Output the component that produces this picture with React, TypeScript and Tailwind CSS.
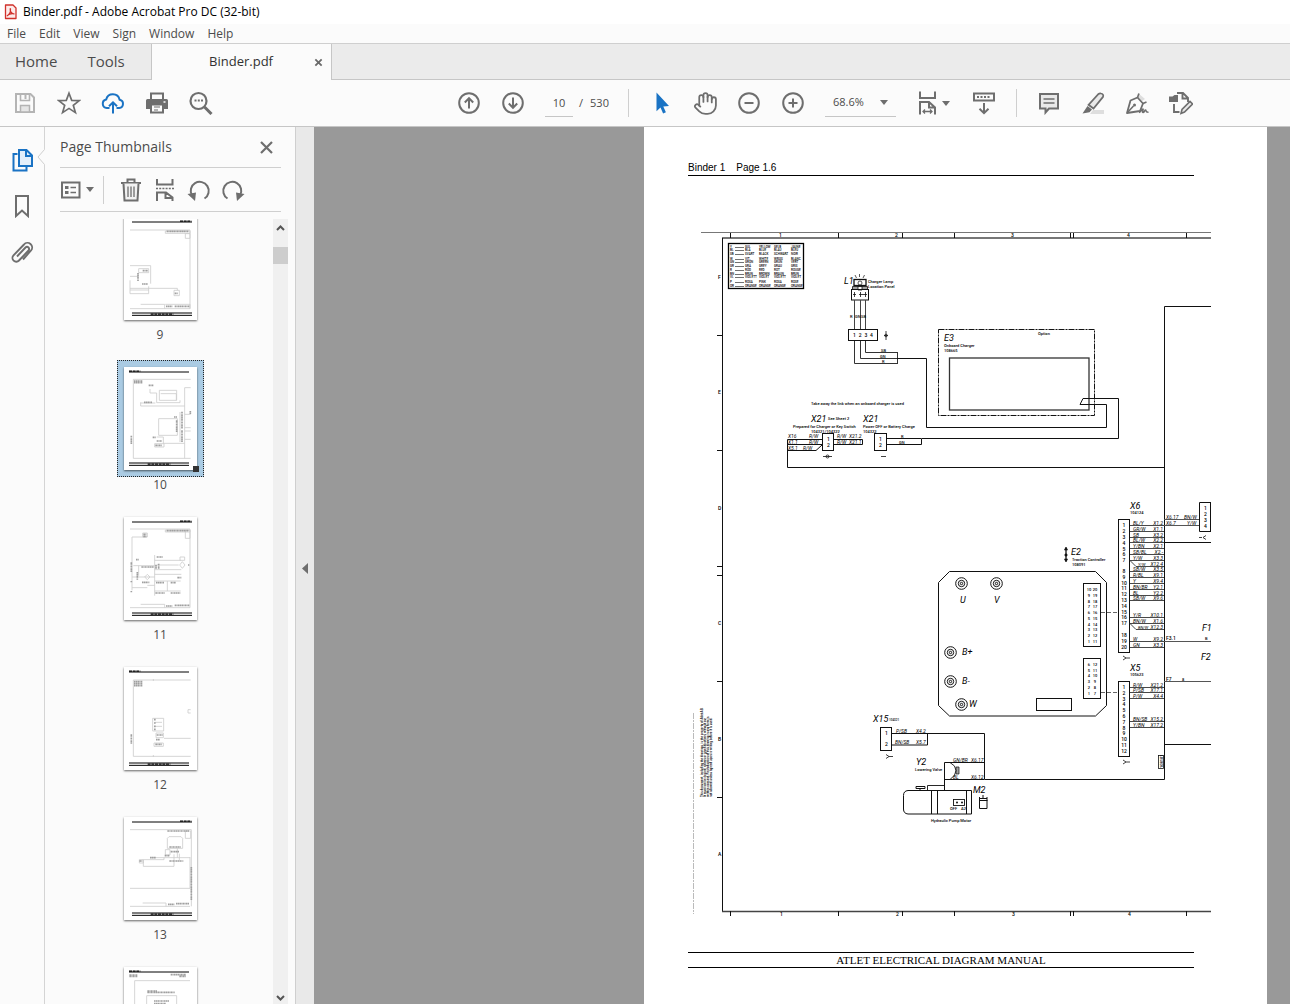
import type { ReactNode } from 'react'
import { Hand } from 'lucide-react'

const uiFont = "font-['Open_Sans','Noto_Sans',sans-serif]"

function Icon({ size = 24, children }: { size?: number; children: ReactNode }) {
  return (
    <svg
      width={size}
      height={size}
      viewBox="0 0 24 24"
      fill="none"
      stroke="currentColor"
      strokeWidth="2"
      className="shrink-0"
      aria-hidden="true"
    >
      {children}
    </svg>
  )
}

function ToolButton({ label, className = 'text-[#6e6e6e]', children }: { label: string; className?: string; children: ReactNode }) {
  return (
    <button type="button" aria-label={label} className={`flex h-10 w-11 shrink-0 items-center justify-center ${className}`}>
      {children}
    </button>
  )
}

function Caret() {
  return (
    <svg width="8" height="5" viewBox="0 0 8 5" className="shrink-0" aria-hidden="true">
      <path d="M0 0h8L4 5z" fill="#6e6e6e" />
    </svg>
  )
}

function TitleBar() {
  return (
    <div className="flex h-6 items-center gap-[6px] bg-white pl-1 text-xs text-black">
      <svg width="13" height="16" viewBox="0 0 13 16" fill="none" aria-hidden="true">
        <path d="M1.500 1h7.500l3 3v10.500h-10.500z" fill="#fdeceb" stroke="#d0312b" strokeWidth="1.300" strokeLinejoin="round" />
        <path d="M3.200 11.800c2.200-1.200 3.600-4 3.300-7M6.200 4.700c-.2 2.600 1.300 4.500 3.700 5.300M3.200 11.600c1.800-1.500 4.400-2.200 6.800-1.800" stroke="#d0312b" strokeWidth="1.200" strokeLinecap="round" />
      </svg>
      <span>Binder.pdf - Adobe Acrobat Pro DC (32-bit)</span>
    </div>
  )
}

function MenuBar() {
  return (
    <nav className="flex h-5 items-center gap-[13px] border-b border-[#cfcfcf] bg-[#fbfbfb] pl-[7px] text-xs leading-[18px] text-[#4b4b4b]">
      {['File', 'Edit', 'View', 'Sign', 'Window', 'Help'].map((item) => (
        <button key={item} type="button">
          {item}
        </button>
      ))}
    </nav>
  )
}

function TabBar() {
  return (
    <div className="flex h-9 bg-[#ebebeb] text-[#4b4b4b]">
      <div className="flex w-[152px] items-center gap-[30px] border-r border-b border-[#c6c6c6] pl-[15px] text-[15px]">
        <button type="button">Home</button>
        <button type="button">Tools</button>
      </div>
      <div className="flex w-[179px] items-center justify-end gap-[41px] bg-[#fbfbfb] pr-2 text-[13px] text-[#323232]">
        <button type="button">Binder.pdf</button>
        <button type="button" aria-label="Close tab">
          <svg width="9" height="9" viewBox="0 0 10 10" aria-hidden="true">
            <path d="M1.500 1.500l7 7M8.500 1.500l-7 7" stroke="#6a6a6a" strokeWidth="2" />
          </svg>
        </button>
      </div>
      <div className="flex-1 border-b border-l border-[#c6c6c6]" />
    </div>
  )
}

function Toolbar() {
  return (
    <div className="flex h-[47px] items-center border-b border-[#c6c6c6] bg-[#fbfbfb] pl-[3px] text-[11px] text-[#4b4b4b]">
      <ToolButton label="Save" className="text-[#b4b4b4]">
        <Icon>
          <path d="M3 3h14.500L21 6.500V21H3z" />
          <path d="M7.500 3v6.500h9V3" strokeWidth="1.600" />
          <path d="M12.500 4v4" />
          <path d="M7.500 21v-6.500h9V21z" fill="#e6e6e6" strokeWidth="1.500" />
        </Icon>
      </ToolButton>
      <ToolButton label="Add to favorites">
        <Icon>
          <path d="M12 2.200l2.700 7.100 7.600.3-6 4.700 2.100 7.300L12 17.400l-6.400 4.200 2.100-7.300-6-4.700 7.600-.3z" strokeWidth="1.700" />
        </Icon>
      </ToolButton>
      <ToolButton label="Upload to cloud" className="text-[#1a73c4]">
        <Icon>
          <path d="M8.500 17H5.800a4.300 4.300 0 0 1-.6-8.500A6.900 6.900 0 0 1 18.600 8.700 4.200 4.200 0 0 1 18.200 17h-2.700" />
          <path d="M12 22.500V11.500M8 15.300l4-4 4 4" />
        </Icon>
      </ToolButton>
      <ToolButton label="Print">
        <Icon>
          <path d="M6 9V2.500h12V9" />
          <path d="M2.500 8h19A1.500 1.500 0 0 1 23 9.500V18H1V9.500A1.500 1.500 0 0 1 2.500 8z" fill="currentColor" stroke="none" />
          <path d="M6 13.500h12v8H6z" fill="#fbfbfb" />
          <path d="M9 16h6M9 19h4" strokeWidth="1.200" />
          <path d="M18.500 11h2" stroke="#fbfbfb" strokeWidth="1.500" />
        </Icon>
      </ToolButton>
      <ToolButton label="Find text">
        <Icon>
          <circle cx="9.500" cy="10" r="8" strokeWidth="2.200" />
          <path d="M15.500 16l7 7" strokeWidth="3" />
          <path d="M5.500 9.500h2M8.800 9.500h2M12 9.500h2" strokeWidth="1.800" />
        </Icon>
      </ToolButton>

      <div className="ml-[224px] flex items-center">
        <ToolButton label="Previous page">
          <Icon>
            <circle cx="12" cy="12" r="9.800" />
            <path d="M12 17.500V7.500M7.800 11.500L12 7.200l4.200 4.300" />
          </Icon>
        </ToolButton>
        <ToolButton label="Next page">
          <Icon>
            <circle cx="12" cy="12" r="9.800" />
            <path d="M12 6.500v10M7.800 12.500l4.200 4.300 4.200-4.300" />
          </Icon>
        </ToolButton>
        <input
          aria-label="Page number"
          defaultValue="10"
          className="ml-[10px] h-7 w-7 border-b border-[#c6c6c6] bg-transparent text-center outline-none"
        />
        <span className="ml-[6px] flex w-[43px] gap-[7px]">
          <span>/</span>
          <span>530</span>
        </span>
        <div className="mx-[6px] h-7 w-px bg-[#cfcfcf]" />
      </div>

      <div className="ml-[4px] flex items-center">
        <ToolButton label="Select" className="text-[#1a73c4]">
          <Icon>
            <path d="M7.500 1.500v18.800l4-3.800 2.600 6 2.800-1.200-2.600-5.800 5.700-.5z" fill="currentColor" stroke="none" />
          </Icon>
        </ToolButton>
        <ToolButton label="Pan">
          <Hand size={25} strokeWidth={1.700} />
        </ToolButton>
        <ToolButton label="Zoom out">
          <Icon>
            <circle cx="12" cy="12" r="9.800" />
            <path d="M7.500 12h9" />
          </Icon>
        </ToolButton>
        <ToolButton label="Zoom in">
          <Icon>
            <circle cx="12" cy="12" r="9.800" />
            <path d="M7.500 12h9M12 7.500v9" />
          </Icon>
        </ToolButton>
        <div className="ml-[10px] flex h-7 w-[71px] items-center border-b border-[#c6c6c6] pr-2 pl-2">
          <select aria-label="Zoom level" defaultValue="68.6%" className="w-0 flex-1 appearance-none bg-transparent outline-none">
            <option>68.6%</option>
          </select>
          <Caret />
        </div>
        <button type="button" aria-label="Fit width" className="ml-5 flex h-10 items-center gap-[2px] text-[#6e6e6e]">
          <Icon>
            <path d="M4 .5V7h15V.5" />
            <path d="M4 23.500V11h9l6 5.500v7M13 11v5.500h6" />
            <path d="M7 20.500h9M9 18.500l-2 2 2 2M14 18.500l2 2-2 2" strokeWidth="1.300" />
          </Icon>
          <Caret />
        </button>
        <div className="w-[12px]" />
        <ToolButton label="Scrolling pages">
          <Icon>
            <path d="M2 2.500h20v7H2z" />
            <path d="M5 6h14" strokeDasharray="2 1.500" />
            <path d="M12 12v10M7.500 17.800l4.500 4.400 4.500-4.400" />
          </Icon>
        </ToolButton>
        <div className="mx-[10px] h-7 w-px bg-[#cfcfcf]" />
        <ToolButton label="Add comment">
          <Icon>
            <path d="M3 3h18v14.500H12L8.500 21.500v-4H3z" fill="#e9e9e9" />
            <path d="M6.500 8h11M6.500 12h11" strokeWidth="1.500" />
          </Icon>
        </ToolButton>
        <ToolButton label="Highlight text">
          <Icon>
            <path d="M12 19h11v4H9z" fill="#dedede" stroke="none" />
            <path d="M20 2.500a2.300 2.300 0 0 1 2 3.400L12.500 17.500l-5-3.700L17.500 3a3 3 0 0 1 2.500-.5z" fill="#e9e9e9" strokeWidth="1.700" />
            <path d="M6.500 15l4.500 3.500-2.500 2.800L1.500 22.500z" fill="currentColor" stroke="none" />
          </Icon>
        </ToolButton>
        <ToolButton label="Sign document">
          <Icon>
            <path d="M13 2l7 6-3 2-5-4.500z" fill="#dedede" stroke="none" />
            <path d="M2 22L5.500 9.500l7-3 5.500 6-3 7.500z" strokeWidth="1.800" strokeLinejoin="round" />
            <path d="M2.500 21.500l6-6.500M12.500 6.500l1.500-4M18 12.500l3.500-1.500" strokeWidth="1.600" />
            <circle cx="9.500" cy="14" r="1.500" fill="currentColor" stroke="none" />
            <path d="M14 21.500c2-.5 3-4 4-3.500s-1.500 3.500 0 3.500 1.500-2.500 2.500-2.500-.5 2.500 3 2.300" strokeWidth="1.500" />
          </Icon>
        </ToolButton>
        <ToolButton label="Edit PDF">
          <Icon>
            <path d="M8 2h6l5 5v4M13.500 2v5.500h5.500M5 13v8h5.500" strokeWidth="1.900" />
            <path d="M0 5.500h3.500L5.500 4H9v7H0z" fill="currentColor" stroke="none" />
            <path d="M12 22.500l1-4 8-8 2.500 2.500-8 8z" fill="#e9e9e9" strokeWidth="1.600" />
          </Icon>
        </ToolButton>
      </div>
    </div>
  )
}

function NavRail() {
  return (
    <div className="relative flex w-[45px] shrink-0 flex-col items-center gap-[22px] border-r border-[#d4d4d4] pt-[21px] text-[#6e6e6e]">
      <button type="button" aria-label="Page thumbnails" className="text-[#1a73c4]">
        <Icon>
          <path d="M7.500 6H3.500v16.500h13V19" fill="none" />
          <path d="M9 2h7.500L22 7.500V18H9z" fill="#e4effa" />
          <path d="M16 2v6h6" />
        </Icon>
      </button>
      <button type="button" aria-label="Bookmarks">
        <Icon>
          <path d="M6 2h12v20l-6-5.500L6 22z" />
        </Icon>
      </button>
      <button type="button" aria-label="Attachments">
        <Icon>
          <path d="M7 16.500l8.500-9a2.100 2.100 0 0 1 3 3l-9.500 10a3.700 3.700 0 0 1-5.500-5.200L14 4.500a4.500 4.500 0 0 1 7 6L13 19.500" strokeWidth="1.900" />
        </Icon>
      </button>
      <svg width="8" height="16" viewBox="0 0 8 16" className="absolute top-[22px] -right-px" aria-hidden="true">
        <path d="M8 0v16L1 8z" fill="#fbfbfb" />
        <path d="M7.500 .5L1 8l6.500 7.500" fill="none" stroke="#cfcfcf" />
      </svg>
    </div>
  )
}

type Thumb = { page: number; lines: string; dense: string }

// Paths are in thirds of a pixel of the thumbnail
const thumbs: Thumb[] = [
  {
    page: 9,
    lines:
      'M18 39H198M198 39V275M18 275H198M18 146H80V200M18 178H42M18 190V230H74V208M18 214H160M18 219H74M160 214V220M150 220h16v16h-16zM124 42h74v7h-74zM184 50h14v14h-14zM44 155h30v12h-30zM50 262h72v13M124 262h74v13',
    dense: 'M56 161H72M42 168V192M54 201H72M128 43H194M126 268H146M152 268H196M152 229H162',
  },
  {
    page: 10,
    lines:
      'M28 37H200M28 37V274M28 274H200M182 274V62H200M106 70h52v30h-52zM110 80h47v20M78 66V78H98V107H168V100M50 106V117H182M50 108H94M104 155h56v50h-56zM168 135v90M182 142H200M182 182H200M182 192H200M182 217H200M98 210H118V229H182M92 230h28v10h-28z',
    dense: 'M30 42H56M30 47H56M74 55H88M60 106H84M158 160V196M174 134V185M174 190V225M150 150H160M86 211H96M98 222H114M94 235H114M22 206V232M199 132V142',
  },
  {
    page: 11,
    lines:
      'M18 36H198V272M18 272H198M24 60V220M24 60H68M92 114V236M92 130H170M92 144H164M92 158H172M92 172H172M92 192H170M24 180H92M24 212H70M28 146H92M130 192V222M44 146V176M70 205H92M92 222H170M56 48h14v12h-14zM184 40h14v24h-14zM124 39h74v6h-74zM50 262h72v10M168 120h14v10h-14zM175 134l8 10-8 10-8-10zM70 172l8 8-8 8-8-8z',
    dense: 'M128 41H194M58 52H68M58 58H68M52 150H90M96 144V156M104 140V156M22 136V166M22 192V196M40 165V188M54 196H76M96 197H120M140 197H156M94 228H122M140 228H170M160 182H172M98 120H116M126 267H146M152 265H196M36 128H44M192 144H196M22 222V226',
  },
  {
    page: 12,
    lines: 'M28 39H200M28 39V268M28 268H200M86 154h33v38h-33zM92 166H114M92 178H114M120 214H200M96 198h22v14h-22zM90 228h28v10h-28zM200 128h-8v10h8M88 36v6M88 264v6',
    dense: 'M30 44H56M30 50H56M30 56H56M90 158H96M90 168H96M90 178H96M90 187H96M98 204H116M96 218H108M94 232H114M22 202V230',
  },
  {
    page: 13,
    lines:
      'M18 38H202V268M18 268H198M198 120V214H18M130 64l5-5h36l5 5v30h-46zM80 122H198M58 148H150V112M58 128V148M58 128H120V122M160 94V122M166 110v20M124 98h14v16h-14zM46 128h12v10h-12zM184 42h16v22h-16zM56 258h70v10',
    dense: 'M136 90H170M130 42H196M78 122H96M140 104H166M122 116H136M136 132H178M46 132H56M202 150V250M132 262H152M156 260H196',
  },
  {
    page: 14,
    lines: 'M32 41H198M32 41V300M68 86h90V300H68z',
    dense: 'M16 24H40M16 28H40M140 23H186M166 28H186M70 72H100M70 76H152M90 102H136M90 110H126',
  },
]

function PageThumb({ thumb, showNumber }: { thumb: Thumb; showNumber: boolean }) {
  const selected = thumb.page === 10
  const left = thumb.page % 2 ? 24 : 15
  const titleX = thumb.page % 2 ? 168 : 15
  return (
    <button type="button" aria-label={`Page ${thumb.page}`} className="flex h-[150px] shrink-0 flex-col items-center">
      <span className={`relative border p-[6px] ${selected ? 'border-dotted border-[#222] bg-[#aacbe3]' : 'border-transparent'}`}>
        <svg
          width="73"
          height="103"
          viewBox="0 0 219 309"
          fill="none"
          className="bg-white shadow-[0_1px_2px_rgba(0,0,0,0.6)]"
          aria-hidden="true"
        >
          <path d={thumb.lines} stroke="#cccccc" strokeWidth="2.500" />
          <path d={thumb.dense} stroke="#a0a0a0" strokeWidth="5" strokeDasharray="5 1 3 1" />
          <path d={`M${left} 15H${left + 180}M${left} 288H${left + 180}M${left} 295H${left + 180}`} stroke="#000" strokeWidth="3" />
          <path d={`M${titleX} 12.500h34M${left + 56} 291.500h68`} stroke="#000" strokeWidth="4" strokeDasharray="9 2" />
        </svg>
        {selected && <span className="absolute right-1 bottom-1 size-[6px] bg-[#333]" />}
      </span>
      {showNumber && <span className="text-xs leading-4 text-[#4b4b4b]">{thumb.page}</span>}
    </button>
  )
}

function ThumbnailPanel() {
  return (
    <aside className="flex w-[250px] shrink-0 flex-col">
      <div className="mr-[14px] ml-[15px] flex h-[41px] items-center justify-between border-b border-[#cfcfcf] pr-2 text-[#4b4b4b]">
        <h2 className="text-sm">Page Thumbnails</h2>
        <button type="button" aria-label="Close panel">
          <svg width="13" height="13" viewBox="0 0 13 13" aria-hidden="true">
            <path d="M1 1l11 11M12 1L1 12" stroke="#6e6e6e" strokeWidth="2.200" />
          </svg>
        </button>
      </div>
      <div className="mr-[14px] ml-[15px] flex h-11 shrink-0 items-center border-b border-[#cfcfcf] text-[#6e6e6e]">
        <button type="button" aria-label="Options" className="flex items-center gap-[5px]">
          <svg width="21" height="18" viewBox="0 0 21 18" fill="none" stroke="currentColor" strokeWidth="2" aria-hidden="true">
            <path d="M2 1.500h17.500v15H2z" />
            <path d="M5 6.500h3.500M5 11.500h3.500" strokeWidth="3.200" />
            <path d="M10.500 6.500H16M10.500 11.500H16" strokeWidth="1.600" />
          </svg>
          <Caret />
        </button>
        <div className="mr-[15px] ml-[9px] h-7 w-px bg-[#cfcfcf]" />
        <div className="flex gap-[10px]">
          <button type="button" aria-label="Delete pages">
            <Icon>
              <path d="M2 5h20M8.500 4.500v-3h7v3" />
              <path d="M4.500 5.500l1 17h13l1-17" fill="#f1f1f1" />
              <path d="M9 8.500v10.500M12 8.500v10.500M15 8.500v10.500" strokeWidth="1.300" />
            </Icon>
          </button>
          <button type="button" aria-label="Insert pages">
            <Icon>
              <path d="M4 1v5.500h15.500V1" />
              <path d="M3 10.500h18" strokeWidth="1.600" strokeDasharray="2 1.200" />
              <path d="M4 23v-8.500h9l6.500 5V23M12.500 14.500V20h7" />
            </Icon>
          </button>
          <button type="button" aria-label="Rotate left">
            <Icon>
              <path d="M5 17.500A9 9 0 1 1 17.500 20.500" />
              <path d="M.5 16l8.500-1.500-1 8.500z" fill="currentColor" stroke="none" />
            </Icon>
          </button>
          <button type="button" aria-label="Rotate right">
            <Icon>
              <path d="M19 17.500A9 9 0 1 0 6.500 20.500" />
              <path d="M23.500 16l-8.500-1.500 1 8.500z" fill="currentColor" stroke="none" />
            </Icon>
          </button>
        </div>
      </div>
      <div className="mt-[7px] flex min-h-0 flex-1 pr-[7px]">
        <div className="flex flex-1 flex-col items-center overflow-hidden pl-[2px]">
          <div className="-mt-[9px] flex flex-col">
            {thumbs.map((thumb, i) => (
              <PageThumb key={thumb.page} thumb={thumb} showNumber={i < thumbs.length - 1} />
            ))}
          </div>
        </div>
        <div className="flex w-[15px] flex-col items-center bg-[#f0f0f0]">
          <button type="button" aria-label="Scroll up" className="flex h-[17px] items-center">
            <svg width="9" height="6" viewBox="0 0 9 6" fill="none" aria-hidden="true">
              <path d="M1 5l3.500-3.500L8 5" stroke="#555" strokeWidth="2" />
            </svg>
          </button>
          <div className="mt-[11px] h-[17px] w-full bg-[#cdcdcd]" />
          <button type="button" aria-label="Scroll down" className="mt-auto flex h-[13px] items-center">
            <svg width="9" height="6" viewBox="0 0 9 6" fill="none" aria-hidden="true">
              <path d="M1 1l3.500 3.500L8 1" stroke="#555" strokeWidth="2" />
            </svg>
          </button>
        </div>
      </div>
    </aside>
  )
}

const legend = [
  [248, 'Y', 'GUL', 'YELLOW', 'GELB', 'JAUNE'],
  [251, 'BL', 'BLÅ', 'BLUE', 'BLAU', 'BLEU'],
  [255, 'SB', 'SVART', 'BLACK', 'SCHWARZ', 'NOIR'],
  [260, 'W', 'VIT', 'WHITE', 'WEISS', 'BLANC'],
  [263, 'GN', 'GRÖN', 'GREEN', 'GRÜN', 'VERT'],
  [267, 'GR', 'GRÅ', 'GREY', 'GRAU', 'GRIS'],
  [271, 'R', 'RÖD', 'RED', 'ROT', 'ROUGE'],
  [275, 'BN', 'BRUN', 'BROWN', 'BRAUN', 'BRUN'],
  [278, 'VL', 'VIOLETT', 'VIOLET', 'VIOLETT', 'VIOLET'],
  [283, 'P', 'ROSA', 'PINK', 'ROSA', 'ROSE'],
  [287, 'OR', 'ORANGE', 'ORANGE', 'ORANGE', 'ORANGE'],
] as const

// y of the wire, colour code, destination, branch wire
const wires: [number, string, string, boolean?][] = [
  [525.5, 'BL/Y', 'X1.2'],
  [531.5, 'GR/W', 'X1.1'],
  [537.5, 'SB', 'X3.2'],
  [542.5, 'BL/W', 'X2.2'],
  [548.5, 'Y/BN', 'X2.1'],
  [554.5, 'SB/BL', 'X2.-'],
  [560.5, 'Y/W', 'X3.3'],
  [566.5, 'Y/W', 'X12.4', true],
  [571.5, 'SB/W', 'X3.5'],
  [577.5, 'R/BL', 'X9.1'],
  [583.5, 'Y', 'X9.4'],
  [589.5, 'BN/BR', 'Y2.1'],
  [595.5, 'BL', 'Y2.2'],
  [600.5, 'SB/W', 'X9.6'],
  [617.5, 'Y/R', 'X10.1'],
  [623.5, 'BN/W', 'X1.6'],
  [629.5, 'BN/W', 'X12.3', true],
  [641.5, 'W', 'X9.2'],
  [647.5, 'GN', 'X3.3'],
  [687.5, 'R/W', 'X21.2'],
  [692.5, 'P/SB', 'X17.1'],
  [698.5, 'P/W', 'X4.4'],
  [721.5, 'BN/SB', 'X15.2'],
  [727.5, 'Y/BN', 'X17.2'],
]

const x6Pins = [527, 533, 539, 545, 551, 556, 562, 573, 579, 585, 590, 596, 602, 608, 614, 619, 625, 637, 643, 649]
const rulerTicks = [730, 838, 902, 954, 1070, 1073, 1186]
const terminals = [
  [961.5, 583.5],
  [996.5, 583.5],
  [950.5, 652.5],
  [950.5, 681.5],
  [961.5, 704.5],
]

function Note({ x, y, size = 4, children }: { x: number; y: number; size?: number; children: ReactNode }) {
  return (
    <text x={x} y={y} fontSize={size} fontWeight={500}>
      {children}
    </text>
  )
}

function Tag({ x, y, size = 9, children }: { x: number; y: number; size?: number; children: ReactNode }) {
  return (
    <text x={x} y={y} fontSize={size} fontStyle="italic">
      {children}
    </text>
  )
}

function WiringDiagram() {
  return (
    <svg
      viewBox="688 226 524 694"
      className="block w-[524px] font-['Roboto',sans-serif]"
      role="img"
      aria-label="Wiring diagram"
    >
      {/* sheet frame */}
      <g fill="none" stroke="#111">
        <path d="M701 232.500H1211" stroke="#777" />
        <path d="M722 238H1211" stroke="#777" strokeWidth="2" />
        <path d="M722.500 238V911.500" />
        <path d="M722 911.500H1211" stroke="#444" strokeWidth="1.500" />
        <path d="M717 335.500h5M717 450.500h5M717 566.500h5M717 575.500h5M717 681.500h5M717 797.500h5" />
        <path d="M693.500 713V914" stroke="#bbb" strokeDasharray="6 1 2 1" />
        {rulerTicks.map((x) => (
          <path key={x} d={`M${x + 0.5} 233v5M${x + 0.5} 911v5`} />
        ))}
      </g>
      <g>
        {[780, 896, 1012, 1128].map((x, i) => (
          <g key={x}>
            <Note x={x - 1} y={237} size={5}>{i + 1}</Note>
            <Note x={x} y={916} size={5}>{i + 1}</Note>
          </g>
        ))}
        {['F', 'E', 'D', 'C', 'B', 'A'].map((letter, i) => (
          <Note key={letter} x={718} y={279 + i * 115.4} size={5}>{letter}</Note>
        ))}
      </g>

      {/* colour code legend */}
      <rect x="728.500" y="243.500" width="75" height="45" fill="none" stroke="#000" strokeWidth="1.300" />
      {legend.map(([y, code, sv, en, de, fr]) => (
        <g key={code}>
          <path d={`M735 ${y - 0.5}h9`} stroke="#333" strokeWidth=".7" />
          <Note x={730} y={y} size={3}>{code}</Note>
          <Note x={745} y={y} size={3}>{sv}</Note>
          <Note x={759} y={y} size={3}>{en}</Note>
          <Note x={774} y={y} size={3}>{de}</Note>
          <Note x={791} y={y} size={3}>{fr}</Note>
        </g>
      ))}

      {/* charger lamp */}
      <g fill="none" stroke="#111">
        <path d="M859.500 274v3M855 275l1.500 3M864.500 275l-1.500 3" strokeWidth=".7" />
        <rect x="854" y="279.500" width="12" height="6" strokeWidth="1.300" />
        <circle cx="860" cy="283" r="2" strokeWidth=".7" />
        <path d="M852.500 286.500h15v3h-15zM858 286v4h4v-4z" fill="#111" fillOpacity=".4" strokeWidth=".8" />
        <rect x="851.500" y="289.500" width="17" height="10.500" />
        <path d="M853 294.500h3M859 294.500h8M854.500 292v5M860.500 292v5M865.500 292v5" strokeWidth=".8" />
        <path d="M854.500 300V329M860.500 300V329M865.500 300V329" stroke="#444" />
        <rect x="848.500" y="329.500" width="29" height="11" />
        <path d="M854.500 341V363.500H897.500M860.500 341V358.500H897M865.500 341V352.500H897.500M897.500 352V364" stroke="#333" />
        <path d="M884 335.500h4M886 331v9" strokeWidth=".8" />
        <circle cx="886" cy="335.500" r="1.300" strokeWidth=".7" />
      </g>
      <Tag x={844} y={284}>L1</Tag>
      <Note x={868} y={283}>Charger Lamp</Note>
      <Note x={868} y={288}>Location Panel</Note>
      {[1, 2, 3, 4].map((n, i) => (
        <Note key={n} x={853 + i * 5.7} y={337} size={5}>{n}</Note>
      ))}
      <Note x={850} y={318}>R</Note>
      <Note x={855} y={318}>GN</Note>
      <Note x={861} y={318}>SB</Note>
      <Note x={881} y={352}>SB</Note>
      <Note x={880} y={358}>GN</Note>
      <Note x={882} y={363}>R</Note>

      {/* onboard charger */}
      <g fill="none" stroke="#111">
        <rect x="938.500" y="329.500" width="156" height="86" strokeDasharray="6 1 2 1" />
        <rect x="949.500" y="358" width="139.500" height="52" stroke="#333" strokeWidth="1.300" />
        <path d="M897 358.500H926.500V427.500H1106.500V404.500H1080L1083 398.500H1118.500V438.500H921.500V444.500H886M886 438.500H921" />
      </g>
      <Tag x={944} y={341}>E3</Tag>
      <Note x={944} y={347}>Onboard Charger</Note>
      <Note x={944} y={352}>108665</Note>
      <Note x={1038} y={335}>Option</Note>

      {/* X21 connectors */}
      <g fill="none" stroke="#111">
        <path d="M822 439.500H787.500V467.500H1164M787 444.500H822M787 450.500H816L822 445" />
        <path d="M834 439.500H862.500V444.500H834" />
        <rect x="822.500" y="433.500" width="11" height="17" />
        <rect x="874.500" y="433.500" width="12" height="17" />
        <path d="M823 456.500h9M881 456.500h5" strokeWidth=".8" />
        <circle cx="827.500" cy="456.500" r="1.500" strokeWidth=".8" />
      </g>
      <Note x={811} y={405}>Take away the link when an onboard charger is used</Note>
      <Tag x={811} y={422}>X21</Tag>
      <Note x={828} y={420}>See Sheet 2</Note>
      <Tag x={863} y={422}>X21</Tag>
      <Note x={793} y={428}>Prepared for Charger or Key Switch</Note>
      <Note x={811} y={433}>104321/104322</Note>
      <Note x={863} y={428}>Power OFF or Battery Charge</Note>
      <Note x={863} y={433}>104322</Note>
      <Tag x={788} y={438} size={5}>X16</Tag>
      <Tag x={788} y={444} size={5}>X1.1</Tag>
      <Tag x={788} y={450} size={5}>X5.1</Tag>
      <Tag x={809} y={438} size={5}>R/W</Tag>
      <Tag x={809} y={444} size={5}>R/W</Tag>
      <Tag x={803} y={450} size={5}>R/W</Tag>
      <Tag x={837} y={438} size={5}>R/W</Tag>
      <Tag x={837} y={444} size={5}>R/W</Tag>
      <Tag x={849} y={438} size={5}>X21.2</Tag>
      <Tag x={849} y={444} size={5}>X21.1</Tag>
      {[826, 878].map((x) => (
        <g key={x}>
          <Note x={x + 1} y={441} size={5}>1</Note>
          <Note x={x + 1} y={447} size={5}>2</Note>
        </g>
      ))}
      <Note x={901} y={438}>R</Note>
      <Note x={899} y={444}>GN</Note>

      {/* main bus */}
      <g fill="none" stroke="#111">
        <path d="M1211 306.500H1164.500V779.500H984.500V733.500H892" />
        <path d="M1164 542.500H1211M1164 744.500H1211" />
        <path d="M1164 519.500H1199M1164 525.500H1199M1164 641.500H1211M1164 681.500H1211" stroke="#555" />
        <path d="M1211 502.500H1199.500V531.500H1211M1210.500 502V532" />
        <path d="M1199 537.500h3M1206 535.500l-3 2 3 2" strokeWidth=".8" />
        <rect x="1158.500" y="755.500" width="5" height="13" strokeWidth=".8" />
      </g>
      <text fontSize="4" fontWeight="500" transform="translate(1163 768) rotate(-90)">108101</text>
      <Tag x={1166} y={519} size={5}>X6.17</Tag>
      <Tag x={1166} y={525} size={5}>X6.7</Tag>
      <Tag x={1184} y={519} size={5}>BN/W</Tag>
      <Tag x={1187} y={525} size={5}>Y/W</Tag>
      {[1, 2, 3, 4].map((n, i) => (
        <Note key={n} x={1204} y={510 + i * 6} size={5}>{n}</Note>
      ))}
      <Tag x={1202} y={631}>F1</Tag>
      <Tag x={1201} y={660}>F2</Tag>
      <Note x={1166} y={640} size={5}>F3.1</Note>
      <Note x={1205} y={640}>B</Note>
      <Note x={1166} y={681} size={5}>F7</Note>
      <Note x={1182} y={681}>8</Note>

      {/* X6 and X5 */}
      <g fill="none" stroke="#111">
        <rect x="1118.500" y="519.500" width="11" height="133" />
        <rect x="1118.500" y="681.500" width="11" height="75" />
        <path d="M1123 656l3 2-3 2M1126 658h4M1123 760l3 2-3 2M1126 762h4" strokeWidth=".8" />
        <path d="M1101 612.500H1118M1101 692.500H1118" stroke="#666" strokeDasharray="4 2" />
      </g>
      <Tag x={1130} y={509}>X6</Tag>
      <Note x={1130} y={514}>104124</Note>
      <Tag x={1130} y={671}>X5</Tag>
      <Note x={1130} y={676}>105623</Note>
      <g textAnchor="middle">
        {x6Pins.map((y, i) => (
          <Note key={y} x={1124} y={y} size={5}>{i + 1}</Note>
        ))}
        {Array.from({ length: 12 }, (_, i) => (
          <Note key={i} x={1124} y={689 + i * 5.800} size={5}>{i + 1}</Note>
        ))}
      </g>
      {wires.map(([y, colour, target, branch]) => (
        <g key={y}>
          <path d={branch ? `M1130 ${y - 6}l6 6H1164` : `M1130 ${y}H1164`} stroke="#333" strokeWidth=".9" fill="none" />
          <Tag x={branch ? 1138 : 1133} y={y - 0.5} size={branch ? 4 : 5}>{colour}</Tag>
          <text x="1163" y={y - 0.5} fontSize="5" fontStyle="italic" textAnchor="end">{target}</text>
        </g>
      ))}

      {/* traction controller */}
      <g fill="none" stroke="#111">
        <path d="M949.500 571.500H1095.500L1106.500 582.500V705.500L1095.500 716H949.500L938.500 705.500V582.500Z" />
        {terminals.map(([x, y]) => (
          <g key={`${x}-${y}`}>
            <circle cx={x} cy={y} r="5.800" />
            <circle cx={x} cy={y} r="3.200" />
            <circle cx={x} cy={y} r="1.200" />
          </g>
        ))}
        <rect x="1036.500" y="698.500" width="35" height="12" />
        <rect x="1083.500" y="583.500" width="17" height="63" />
        <rect x="1083.500" y="658.500" width="17" height="40" />
        <path d="M1066 548v13" strokeWidth="1.300" />
        <path d="M1064.500 550l1.500-3 1.500 3zM1064.500 559l1.500 3 1.500-3zM1065 554h2v2h-2z" fill="#111" strokeWidth=".7" />
      </g>
      <Tag x={1071} y={555}>E2</Tag>
      <Note x={1072} y={561}>Traction Controller</Note>
      <Note x={1072} y={566}>108091</Note>
      <Tag x={960} y={603}>U</Tag>
      <Tag x={994} y={603}>V</Tag>
      <Tag x={962} y={655}>B+</Tag>
      <Tag x={962} y={684}>B-</Tag>
      <Tag x={969} y={707}>W</Tag>
      <g textAnchor="middle">
        {Array.from({ length: 10 }, (_, i) => (
          <g key={i}>
            <Note x={1089} y={591 + i * 5.750}>{10 - i}</Note>
            <Note x={1095} y={591 + i * 5.750}>{20 - i}</Note>
          </g>
        ))}
        {Array.from({ length: 6 }, (_, i) => (
          <g key={i}>
            <Note x={1089} y={666 + i * 5.700}>{6 - i}</Note>
            <Note x={1095} y={666 + i * 5.700}>{12 - i}</Note>
          </g>
        ))}
      </g>

      {/* X15, lowering valve and pump motor */}
      <g fill="none" stroke="#111">
        <rect x="880.500" y="727.500" width="11" height="23" />
        <path d="M892 745H927.500V733.500" />
        <path d="M886 754.500l3 2-3 2M889 756.500h4" strokeWidth=".8" />
        <path d="M944.500 790V762.500H984M944.500 779.500H984" />
        <path d="M944.500 785.500H927.500V790M950 762.500q6 3 6 8t-6 9" strokeWidth=".9" />
        <path d="M956 767h3v7h-3z" fill="#111" fillOpacity=".4" strokeWidth=".7" />
        <path d="M971.500 790.500H908a5 5 0 0 0-4.500 5V809a5 5 0 0 0 4.500 5H971.500ZM931.500 790V814M937.500 790V814M966.500 790V814" />
        <path d="M916 786.500h9v2h-9zM920 789v2" />
        <rect x="953.500" y="799.500" width="11" height="6" strokeWidth=".9" />
        <circle cx="957" cy="802.500" r="1" fill="#111" stroke="none" />
        <circle cx="962" cy="802.500" r="1" fill="#111" stroke="none" />
        <path d="M979.500 797V808.500H987V797M979 800.500H987.500M979 798.500h8M983 795v4" />
      </g>
      <Tag x={873} y={722}>X15</Tag>
      <Note x={889} y={721} size={3}>104321</Note>
      <Note x={885} y={735} size={5}>1</Note>
      <Note x={885} y={746} size={5}>2</Note>
      <Tag x={896} y={733} size={5}>P/SB</Tag>
      <Tag x={895} y={744} size={5}>BN/SB</Tag>
      <Tag x={916} y={733} size={5}>X4.2</Tag>
      <Tag x={916} y={744} size={5}>X5.7</Tag>
      <Tag x={916} y={765}>Y2</Tag>
      <Note x={915} y={771}>Lowering Valve</Note>
      <Tag x={953} y={762} size={5}>GN/BR</Tag>
      <Tag x={971} y={762} size={5}>X6.17</Tag>
      <Tag x={953} y={779} size={5}>BL</Tag>
      <Tag x={971} y={779} size={5}>X6.12</Tag>
      <Tag x={973} y={793}>M2</Tag>
      <Note x={950} y={810}>OFF</Note>
      <Note x={961} y={810}>A2</Note>
      <Note x={931} y={822}>Hydraulic Pump Motor</Note>

      {/* rights notice along the left edge */}
      <g transform="translate(703 797) rotate(-90)" fontSize="3" fontWeight="700">
        <text y="0">This document, including the drawings, is the property of Atlet AB.</text>
        <text y="3">It must not be copied, shown or given to others without our</text>
        <text y="6">written consent. Reproduction of this drawing in any form is</text>
        <text y="9">not allowed unless agreed upon in writing before it is used.</text>
      </g>
    </svg>
  )
}

function DocumentView() {
  return (
    <main className="min-w-0 flex-1 overflow-hidden bg-[#999] pl-[330px]">
      <article className="w-[623px] bg-white px-[44px] pt-[34px] pb-20 text-black">
        <header className="mr-[29px] flex gap-[11px] border-b border-black font-['Liberation_Sans',sans-serif] text-[10px] leading-[14px]">
          <span>Binder 1</span>
          <span>Page 1.6</span>
        </header>
        <div className="pt-[50px]">
          <WiringDiagram />
        </div>
        <footer className="mt-8 mr-[29px] border-y border-black text-center font-['Liberation_Serif',serif] text-[11px] leading-[14px]">
          ATLET ELECTRICAL DIAGRAM MANUAL
        </footer>
      </article>
    </main>
  )
}

export default function App() {
  return (
    <div className={`flex h-screen flex-col overflow-hidden bg-[#fbfbfb] ${uiFont}`}>
      <TitleBar />
      <MenuBar />
      <TabBar />
      <Toolbar />
      <div className="flex min-h-0 flex-1">
        <NavRail />
        <ThumbnailPanel />
        <button
          type="button"
          aria-label="Collapse panel"
          className="flex w-[19px] shrink-0 items-center justify-center border-l border-[#cfcfcf] bg-[#e9e9e9] pt-[6px]"
        >
          <svg width="6" height="11" viewBox="0 0 6 11" aria-hidden="true">
            <path d="M6 0v11L0 5.500z" fill="#6e6e6e" />
          </svg>
        </button>
        <DocumentView />
      </div>
    </div>
  )
}
